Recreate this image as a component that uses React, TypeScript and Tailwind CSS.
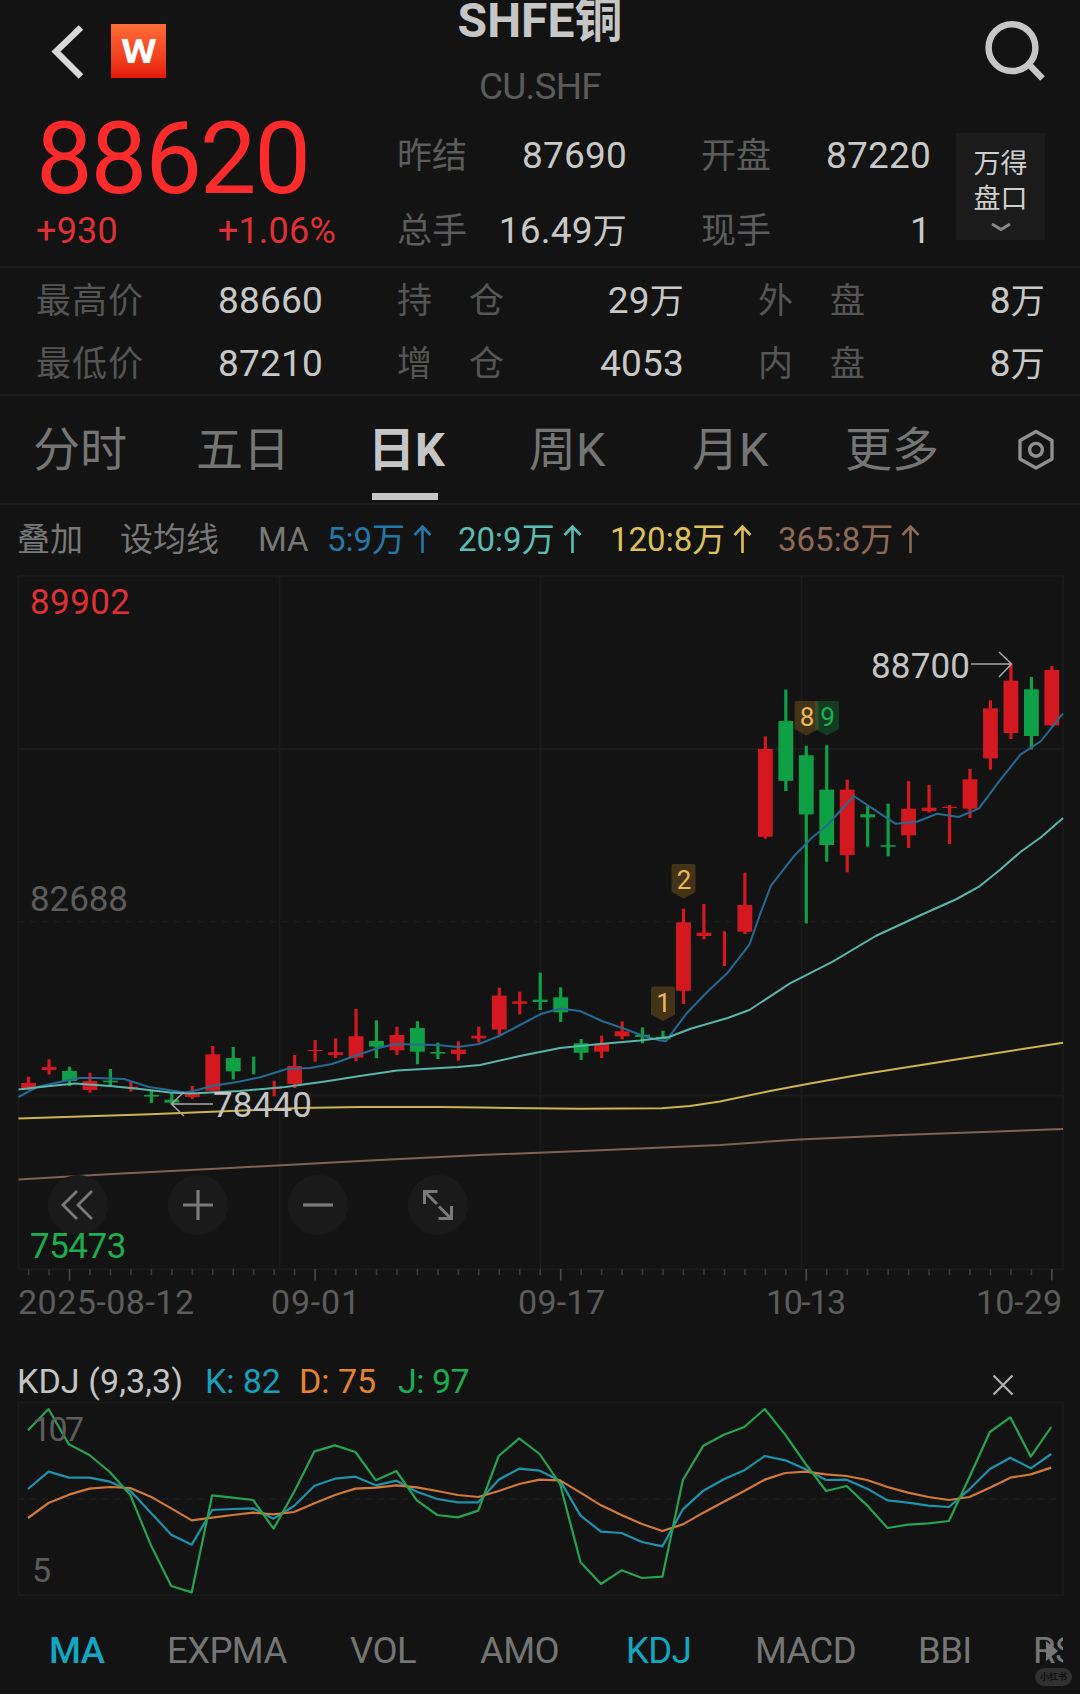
import clsx from "clsx";

type Candle = {
  up?: boolean;
  high: number;
  low: number;
  top?: number;
  bottom?: number;
};

// Horizontal position of the n-th trading day
const dayX = (i: number) => 28.6 + i * 20.465;

// [direction, high, low, body top, body bottom]
const rawCandles: [string, number, number, number?, number?][] = [
  ["u", 1076.7, 1090, 1083, 1089.3],
  ["u", 1059.3, 1074.5, 1067, 1070],
  ["d", 1066.7, 1086, 1071, 1081],
  ["u", 1072.7, 1092.7, 1081, 1090],
  ["d", 1069, 1086.7, 1080.7, 1082.3],
  ["u", 1082, 1091.7, 1086.8, 1088],
  ["d", 1090.7, 1103, 1095, 1096.6],
  ["d", 1092.7, 1104, 1099.7, 1102.7],
  ["u", 1086, 1099, 1092.7, 1097],
  ["u", 1046, 1091, 1054.3, 1090.7],
  ["d", 1047, 1079.5, 1058, 1071.3],
  ["d", 1056.7, 1074.3],
  ["u", 1080.7, 1096.3, 1088, 1089],
  ["u", 1055, 1088, 1066, 1084],
  ["u", 1040, 1061.7, 1050, 1051],
  ["u", 1038.3, 1058, 1052.3, 1055],
  ["u", 1009, 1061, 1036.2, 1057.6],
  ["d", 1020.3, 1058.2, 1041, 1046.7],
  ["u", 1026.7, 1055, 1035, 1050.3],
  ["d", 1021.2, 1064.3, 1028, 1051.7],
  ["d", 1042.7, 1059, 1052, 1053.6],
  ["u", 1041.3, 1060.7, 1049.7, 1054],
  ["u", 1026.7, 1042.7, 1035.7, 1038.4],
  ["u", 987.7, 1035, 995.6, 1029.5],
  ["u", 991.7, 1014.3, 1001.3, 1003.8],
  ["d", 972.7, 1010, 999.7, 1002],
  ["d", 987.3, 1022, 997.3, 1012.3],
  ["d", 1039, 1060, 1043.3, 1052.7],
  ["u", 1035.7, 1058, 1044, 1051.7],
  ["u", 1021.3, 1039.3, 1031.3, 1036.3],
  ["d", 1027.3, 1043.3, 1034.7, 1037],
  ["d", 1030.7, 1039.3, 1036.8, 1039.3],
  ["u", 908.7, 1004, 922.3, 990.8],
  ["u", 904, 939.3, 932.7, 936],
  ["u", 931.3, 966],
  ["u", 872.7, 934, 905, 931.7],
  ["u", 736.3, 838.7, 749, 836.8],
  ["d", 689.6, 791, 721, 780.8],
  ["d", 745.7, 923.4, 755.3, 814.4],
  ["d", 745.3, 861.8, 789.6, 845],
  ["u", 779.7, 872.3, 789.6, 855],
  ["d", 805.7, 846.7, 814.3, 817.4],
  ["d", 803.7, 856.3, 845.2, 846.8],
  ["u", 781.2, 848, 808.7, 835.4],
  ["u", 785, 812.7, 807.7, 811],
  ["u", 805, 844, 806.8, 808],
  ["u", 769, 818, 779.3, 808.7],
  ["u", 700.3, 769.7, 708.3, 758.4],
  ["u", 663.7, 739, 680.7, 733],
  ["d", 677, 749.4, 689.3, 736],
  ["u", 666, 726, 670, 725.4],
];

const candles: Candle[] = rawCandles.map(([dir, high, low, top, bottom]) => ({
  up: dir === "u",
  high,
  low,
  top,
  bottom,
}));

const ma5 =
  "18.5,1097 37,1087 69,1080 80,1078 97,1078 124,1079 149,1087 185,1092.5 197,1090 212,1086 240,1081.5 261,1077 287,1069 310,1068 332,1064 352,1057 375,1049 395,1044 437,1045 458,1047 479,1044 499,1036 520,1025 541,1014 560,1008.5 580,1011 602,1021 622,1028 644,1036 660,1040.5 666,1041.3 669,1037 686,1014 707.4,991.7 727.7,972.7 749.4,944.7 760.4,913.3 771,885.7 793,857.3 811.3,838.3 827.5,825 853.7,796 875.7,810.7 895.4,823.7 917,821.7 937,813.7 958.7,817 979,808.3 999.7,780.7 1020.4,754.7 1041,741 1063,713.3";
const ma20 =
  "18.5,1089.5 50,1086 75,1083.5 110,1086 140,1089 170,1092.5 190,1093.5 240,1091 285,1087 325,1081.5 360,1076 397,1070.5 458,1067 480,1065 520,1056 560,1048 600,1044 640,1040.5 669,1037 690.5,1028.7 727.7,1018 749.4,1010 790,983.3 832.7,961.7 875.7,936 918.8,916 956.7,899 979,886.7 999.7,870 1020.4,852 1041,837.3 1063,818";
const ma120 =
  "18.5,1118.5 150,1114.3 230,1111 300,1108 360,1107 440,1107 480,1107.6 580,1108.8 662,1108.2 690,1106 720,1101.5 770,1091 810,1083.5 864,1074 972,1057 1063,1042.7";
const ma365 =
  "18.5,1179.5 112,1174 230,1168 360,1161 480,1155 600,1150.3 720,1145 799,1139.5 900,1135 1063,1129";

const kValues = [
  267, 215, 233, 233, 245, 272, 338, 404, 434, 330, 327, 325, 356, 318, 257, 236, 230, 256, 242, 275, 297, 307, 307,
  239, 206, 212, 242, 347, 395, 399, 426, 439, 328, 272, 238, 211, 168, 181, 208, 240, 239, 266, 301, 308, 317, 321,
  268, 207, 173, 205, 162,
];
const dValues = [
  354, 309, 284, 266, 261, 264, 290, 325, 361, 353, 345, 338, 343, 336, 310, 285, 266, 263, 256, 262, 273, 285, 291,
  273, 252, 239, 241, 278, 316, 345, 372, 393, 373, 338, 305, 273, 239, 219, 215, 223, 228, 240, 261, 278, 291, 300,
  291, 263, 233, 223, 203,
];
const jValues = [
  91, 27, 133, 165, 216, 285, 435, 558, 577, 286, 293, 300, 386, 276, 154, 136, 156, 241, 213, 301, 345, 352, 332,
  168, 115, 162, 252, 487, 552, 511, 534, 530, 240, 137, 104, 81, 27, 104, 192, 273, 258, 316, 384, 374, 370, 363,
  232, 96, 52, 170, 81,
];

const toPoints = (values: number[]) => values.map((v, i) => `${dayX(i) - 0.6},${v / 3 - 2}`).join(" ");

const stats = [
  ["最高价", "88660"],
  ["持仓", "29万"],
  ["外盘", "8万"],
  ["最低价", "87210"],
  ["增仓", "4053"],
  ["内盘", "8万"],
];

const periods = ["分时", "五日", "日K", "周K", "月K", "更多"];

const averages = [
  { text: "5:9万", color: "text-[#2577a6]" },
  { text: "20:9万", color: "text-[#5cbcb2]" },
  { text: "120:8万", color: "text-[#dcc258]" },
  { text: "365:8万", color: "text-[#8d6a56]" },
];

const dates = [
  { text: "2025-08-12", x: 18, width: 176 },
  { text: "09-01", x: 271, width: 89 },
  { text: "09-17", x: 518, width: 87 },
  { text: "10-13", x: 766, width: 80 },
  { text: "10-29", x: 976, width: 86 },
];

function Header() {
  return (
    <div className="flex h-[112px] shrink-0 justify-between">
      <div className="flex w-[360px] pt-6">
        <svg width="111" height="56" viewBox="0 24 111 56" fill="none" className="shrink-0">
          <path d="M81 27.5 L56 51.5 L81 76.5" stroke="#d8d8d8" strokeWidth="6.4" />
        </svg>
        <div className="flex h-[54px] w-[55px] items-center justify-center bg-linear-to-b from-[#ff6b38] to-[#e6140a] text-[34px] font-bold text-white">
          <span className="scale-x-120">W</span>
        </div>
      </div>
      <div className="flex flex-col items-center">
        <h1 className="text-[48px] leading-[41px] font-bold whitespace-nowrap text-[#c6c6c6]">SHFE铜</h1>
        <p className="mt-[28px] text-[37px] leading-[36px] tracking-[-0.8px] text-[#5a5a5a]">CU.SHF</p>
      </div>
      <div className="flex w-[360px] justify-end pt-[18px] pr-[34px]">
        <svg width="64" height="64" viewBox="982 18 64 64" fill="none" stroke="#c6c6c6" strokeWidth="6.5">
          <circle cx="1012" cy="47.7" r="23.4" />
          <path d="M1029 64.5 L1042.5 78.5" />
        </svg>
      </div>
    </div>
  );
}

// The 万 unit is set slightly smaller than the digits in front of it
function Amount({ value }: { value: string }) {
  const digits = value.replace("万", "");
  return (
    <span className="text-[37px] leading-[44px] tracking-[0.2px] whitespace-nowrap text-[#c8c8c8]">
      {digits}
      {digits !== value && <span className="text-[34px] leading-none">万</span>}
    </span>
  );
}

function QuoteCell({ label, value }: { label: string; value: string }) {
  return (
    <div className="flex h-[75px] items-center justify-between">
      <span className="pt-[3px] text-[35px] text-[#5c5c5c]">{label}</span>
      <Amount value={value} />
    </div>
  );
}

function Quote() {
  return (
    <div className="flex h-[156px] shrink-0 border-b-2 border-[#1e1e1e]">
      <div className="w-[397px] pl-[36px]">
        <div className="mt-[5px] h-[84px] text-[101px] leading-[84px] tracking-[-2.2px] text-[#fb2b2c]">88620</div>
        <div className="flex h-[60px] w-[300px] items-center justify-between text-[36px] leading-[40px] tracking-[0.2px] text-[#dd3136]">
          <span>+930</span>
          <span>+1.06%</span>
        </div>
      </div>
      <div className="mt-[6px] w-[230px]">
        <QuoteCell label="昨结" value="87690" />
        <QuoteCell label="总手" value="16.49万" />
      </div>
      <div className="mt-[6px] ml-[74px] w-[230px]">
        <QuoteCell label="开盘" value="87220" />
        <QuoteCell label="现手" value="1" />
      </div>
      <div className="mt-[21px] ml-[25px] flex h-[107px] w-[89px] flex-col items-center bg-[#1b1b1b] pt-[14px] text-[27px] leading-[35px] text-[#cfcfcf]">
        <span>万得</span>
        <span>盘口</span>
        <svg width="22" height="12" viewBox="0 0 22 12" fill="none" className="mt-[4px]">
          <path d="M2 3 L11 8.5 L20 3" stroke="#888" strokeWidth="2.8" />
        </svg>
      </div>
    </div>
  );
}

function Stats() {
  return (
    <div className="grid h-[128px] shrink-0 grid-cols-3 gap-x-[74px] border-b-2 border-[#1e1e1e] pt-px pr-[35px] pl-[36px]">
      {stats.map(([label, value]) => (
        <div key={label} className="flex h-[63px] items-center justify-between">
          <span className="flex w-[107px] justify-between pt-[3px] text-[35px] text-[#555]">
            {label.split("").map((char) => (
              <span key={char}>{char}</span>
            ))}
          </span>
          <Amount value={value} />
        </div>
      ))}
    </div>
  );
}

function PeriodTabs() {
  return (
    <div className="grid h-[109px] shrink-0 grid-cols-[163px_175px_158px_163px_153px_172px_auto] border-b-2 border-[#1e1e1e] pl-[33px]">
      {periods.map((period) => (
        <div
          key={period}
          className={clsx(
            "flex h-[104px] flex-col items-start pt-[27px] text-[47px] leading-[54px]",
            period === "日K" ? "font-bold text-[#c6c6c6]" : "text-[#757575]"
          )}
        >
          <span className={clsx(period === "日K" && "-ml-[3px]")}>{period}</span>
          {period === "日K" && <span className="mt-4 ml-px h-[7px] w-[66px] bg-[#c6c6c6]" />}
        </div>
      ))}
      <svg width="42" height="44" viewBox="0 0 42 44" fill="none" stroke="#8f8f8f" strokeWidth="3.4" className="mt-[32px]">
        <path d="M19 3.5 L35 12.5 V31 L19 40 L3 31 V12.5 Z" strokeLinejoin="round" />
        <circle cx="19" cy="21.8" r="6.4" />
      </svg>
    </div>
  );
}

function AverageLegend() {
  return (
    <div className="grid h-[70px] shrink-0 grid-cols-[103px_138px_69px_131px_152px_168px_auto] items-center pl-[17px] text-[33px] whitespace-nowrap text-[#777]">
      <span className="text-[33px]">叠加</span>
      <span className="text-[33px]">设均线</span>
      <span>MA</span>
      {averages.map((item) => (
        <span key={item.text} className={clsx("flex items-center gap-[8px]", item.color)}>
          {item.text}
          <svg width="19" height="30" viewBox="0 0 19 30" fill="none" stroke="currentColor" strokeWidth="2.6">
            <path d="M9.5 28 V1.5 M1.5 10 L9.5 1.5 L17.5 10" />
          </svg>
        </span>
      ))}
    </div>
  );
}

function Badge({ x, y, text, green }: { x: number; y: number; text: string; green?: boolean }) {
  return (
    <g>
      <path
        d={`M${x + 2} ${y} h20 q2 0 2 2 v26 l-12 6.5 l-12 -6.5 v-26 q0 -2 2 -2 z`}
        fill={green ? "#12813c" : "#7c5a20"}
        fillOpacity={green ? 0.38 : 0.46}
      />
      <text x={x + 12.5} y={y + 25} fontSize="26" textAnchor="middle" fill={green ? "#1eae50" : "#ecb755"}>
        {text}
      </text>
    </g>
  );
}

function PriceChart() {
  return (
    <div className="relative h-[755px] shrink-0">
      <svg width="1080" height="755" viewBox="0 575 1080 755" fill="none">
        {/* Grid */}
        <g stroke="#1b1b1b" strokeWidth="1.8">
          <rect x="18.5" y="575.8" width="1044.5" height="693.5" />
          <path d="M279.5 576 V1269 M540.5 576 V1269 M801.5 576 V1269 M18 749 H1063 M18 1095.5 H1063" />
          <path d="M18 921.7 H1063" strokeDasharray="6 6" />
        </g>

        {/* Day ticks */}
        {candles.map((_, i) => (
          <path
            key={i}
            d={`M${dayX(i)} 1269 V${i % 12 === 2 ? 1280.5 : 1275}`}
            stroke={i % 12 === 2 ? "#4a4a4a" : "#3c3c3c"}
            strokeWidth="1.6"
          />
        ))}

        {/* Candles */}
        {candles.map((c, i) => {
          const color = c.up ? "#d3191f" : "#0fa046";
          return (
            <g key={i} fill={color}>
              <rect x={dayX(i) - 1.6} y={c.high} width="3.2" height={c.low - c.high} />
              {c.top !== undefined && c.bottom !== undefined && (
                <rect x={dayX(i) - 7.4} y={c.top} width="14.8" height={c.bottom - c.top} />
              )}
            </g>
          );
        })}

        {/* Moving averages */}
        <g strokeWidth="2" strokeLinejoin="round">
          <polyline points={ma365} stroke="#7f6253" />
          <polyline points={ma120} stroke="#cdb450" />
          <polyline points={ma5} stroke="#266a92" />
          <polyline points={ma20} stroke="#5bb5a9" />
        </g>

        <Badge x={651} y={986.5} text="1" />
        <Badge x={671.5} y={864} text="2" />
        <Badge x={794.5} y={701} text="8" />
        <Badge x={815} y={701} text="9" green />

        {/* High and low marks */}
        <g stroke="#a8a8a8" strokeWidth="1.5">
          <path d="M971 664 H1011 M999 652 L1011.5 664 L999 677" />
          <path d="M213 1104 H172 M184 1092 L171.5 1104 L184 1116" />
        </g>
        <g fontSize="35">
          <text x="871" y="678" textLength="99" fill="#c4c4c4">
            88700
          </text>
          <text x="213" y="1117" textLength="99" fill="#c4c4c4">
            78440
          </text>
          <text x="30" y="613.5" textLength="100" fill="#dd3136">
            89902
          </text>
          <text x="30" y="911" textLength="98" fill="#5c5c5c">
            82688
          </text>
        </g>

        {/* Dates */}
        <g fontSize="34" fill="#5c5c5c">
          {dates.map((d) => (
            <text key={d.text} x={d.x} y="1313.5" textLength={d.width}>
              {d.text}
            </text>
          ))}
        </g>
      </svg>

      {/* Chart controls */}
      <div className="absolute top-[600px] left-[48px] flex gap-[60px]">
        <button className="flex size-[60px] items-center justify-center rounded-full bg-[#1a1a1a]">
          <svg width="34" height="32" viewBox="1 0 34 32" fill="none" stroke="#7a7a7a" strokeWidth="2.8">
            <path d="M17 2 L3 16 L17 30 M32 2 L18 16 L32 30" />
          </svg>
        </button>
        <button className="flex size-[60px] items-center justify-center rounded-full bg-[#1a1a1a]">
          <svg width="30" height="30" viewBox="0 0 30 30" stroke="#7a7a7a" strokeWidth="3.2">
            <path d="M15 0 V30 M0 15 H30" />
          </svg>
        </button>
        <button className="flex size-[60px] items-center justify-center rounded-full bg-[#1a1a1a]">
          <svg width="30" height="30" viewBox="0 0 30 30" stroke="#7a7a7a" strokeWidth="3.2">
            <path d="M0 15 H30" />
          </svg>
        </button>
        <button className="flex size-[60px] items-center justify-center rounded-full bg-[#1a1a1a]">
          <svg width="30" height="30" viewBox="0 0 30 30" fill="none" stroke="#7a7a7a" strokeWidth="3">
            <path d="M1.5 14 V1.5 H14.5 M2 2 L14 14 M16 16.5 L28 28.5 M28.5 16 V28.5 H15.5" />
          </svg>
        </button>
      </div>
      <span className="absolute top-[651px] left-[30px] text-[35px] leading-[42px] tracking-[-0.5px] text-[#1dac50]">
        75473
      </span>
    </div>
  );
}

function KdjChart() {
  return (
    <div className="shrink-0">
      <div className="flex h-[72px] items-center pt-[30px] pl-[17px] text-[34px] leading-[42px] whitespace-nowrap">
        <span className="w-[188px] tracking-[0.1px] text-[#c4c4c4]">KDJ (9,3,3)</span>
        <span className="w-[94px] tracking-[-0.1px] text-[#18a0ba]">K: 82</span>
        <span className="w-[99px] text-[#e5842f]">D: 75</span>
        <span className="tracking-[-0.5px] text-[#1eac50]">J: 97</span>
        <svg width="20" height="20" viewBox="0 0 20 20" stroke="#b0b0b0" strokeWidth="2.2" className="mt-[8px] mr-[67px] ml-auto">
          <path d="M0.5 0.5 L19.5 19.5 M19.5 0.5 L0.5 19.5" />
        </svg>
      </div>
      <svg width="1080" height="198" viewBox="0 0 1080 198" fill="none">
        <g stroke="#1b1b1b" strokeWidth="1.8">
          <rect x="18.5" y="0.5" width="1044.5" height="192.5" />
          <path d="M18 97 H1063" strokeDasharray="6 6" />
        </g>
        <g strokeWidth="2.2" strokeLinejoin="round">
          <polyline points={toPoints(kValues)} stroke="#1f93ab" />
          <polyline points={toPoints(dValues)} stroke="#d2793a" />
          <polyline points={toPoints(jValues)} stroke="#26a351" />
        </g>
        <g fontSize="34" fill="#5c5c5c">
          <text x="32" y="38.5" textLength="52">
            107
          </text>
          <text x="32" y="180">
            5
          </text>
        </g>
      </svg>
    </div>
  );
}

function IndicatorTabs() {
  return (
    <div className="relative h-[94px] shrink-0 pt-[28px]">
      <div className="grid w-[1063px] grid-cols-[118px_183px_130px_146px_129px_163px_115px_auto] overflow-hidden pl-[49px] text-[36.5px] leading-[46px] tracking-[-0.6px] whitespace-nowrap text-[#757575]">
        <span className="font-medium text-[#14a6c1]">MA</span>
        <span>EXPMA</span>
        <span>VOL</span>
        <span>AMO</span>
        <span className="text-[#14a6c1]">KDJ</span>
        <span>MACD</span>
        <span>BBI</span>
        <span className="w-[31px] overflow-hidden">RSI</span>
      </div>
      <svg width="14" height="20" viewBox="0 0 14 20" className="absolute top-[41px] left-[1045px]">
        <path d="M1 0 L13 10 L1 20 Z" fill="#777" />
      </svg>
      <span className="absolute top-[68px] left-[1035px] h-[18px] w-[37px] rounded-full bg-[#303030] text-center text-[9px] leading-[18px] font-bold text-[#111]">
        小红书
      </span>
    </div>
  );
}

export default function App() {
  return (
    <div className="flex h-[1694px] w-[1080px] flex-col overflow-hidden bg-[#131313] font-[Roboto,'Noto_Sans_CJK_SC',sans-serif]">
      <Header />
      <Quote />
      <Stats />
      <PeriodTabs />
      <AverageLegend />
      <PriceChart />
      <KdjChart />
      <IndicatorTabs />
    </div>
  );
}
